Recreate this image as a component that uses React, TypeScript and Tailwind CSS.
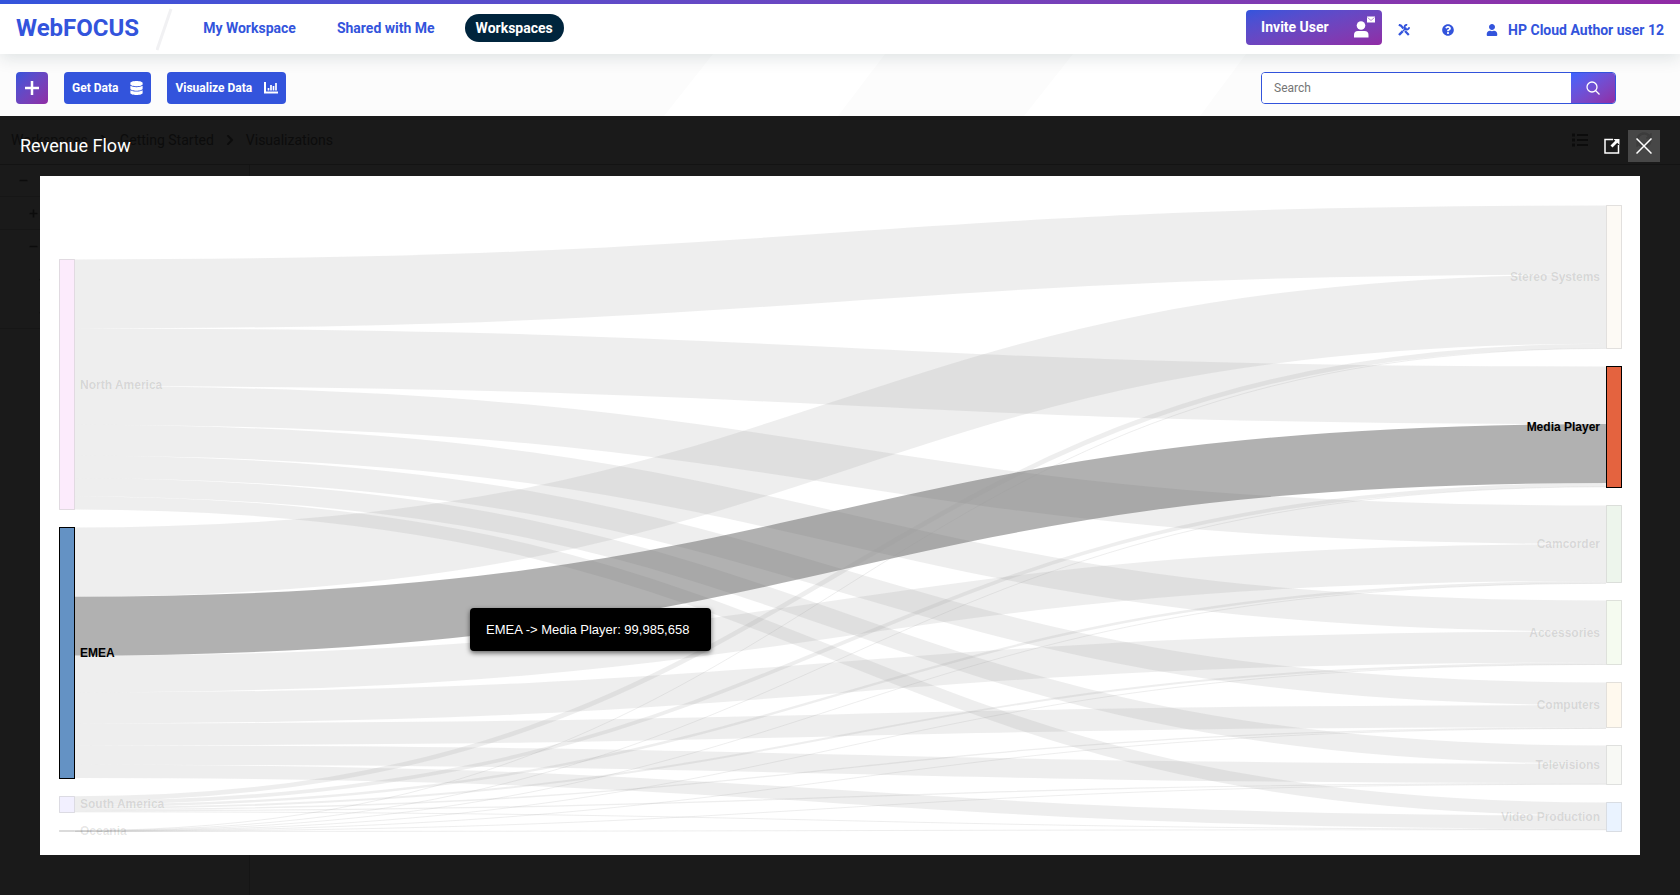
import React from "react";
import { FaDatabase, FaUser, FaQuestionCircle, FaList, FaChevronRight, FaPlus, FaMinus, FaSyncAlt } from "react-icons/fa";

const regions = [
  { name: "North America", y: 259.5, h: 250.4, fill: "#fcebfc", values: [69, 57.6, 38.6, 31, 22.6, 18.2, 13] },
  { name: "EMEA", y: 527.5, h: 250.5, fill: "#6492c4", values: [69.2, 58.9, 36.8, 31, 22, 19.3, 13.3] },
  { name: "South America", y: 796.3, h: 16, fill: "#f2f0ff", values: [4.6, 3.7, 2.4, 1.9, 1.3, 1.2, 0.9] },
  { name: "Oceania", y: 830.5, h: 1, fill: "#eeeeee", values: [0.25, 0.2, 0.15, 0.12, 0.1, 0.1, 0.08] },
];

const products = [
  { name: "Stereo Systems", y: 205.5, h: 143, fill: "#fdfaf5" },
  { name: "Media Player", y: 366.5, h: 121, fill: "#e4633f" },
  { name: "Camcorder", y: 505.5, h: 77, fill: "#edf5ec" },
  { name: "Accessories", y: 600.5, h: 64, fill: "#f5fbf0" },
  { name: "Computers", y: 682.5, h: 45, fill: "#fff9ee" },
  { name: "Televisions", y: 745.5, h: 39, fill: "#f8f9f5" },
  { name: "Video Production", y: 802.5, h: 29, fill: "#eaf3ff" },
];

const LEFT = 75;
const RIGHT = 1606;
const MID = (LEFT + RIGHT) / 2;

function buildLinks() {
  const filled = products.map(() => 0);
  return regions.flatMap((r, i) => {
    let used = 0;
    return r.values.map((v, j) => {
      const y0 = r.y + used + v / 2;
      const y1 = products[j].y + filled[j] + v / 2;
      used += v;
      filled[j] += v;
      return {
        key: `${i}-${j}`,
        d: `M${LEFT},${y0}C${MID},${y0} ${MID},${y1} ${RIGHT},${y1}`,
        width: Math.max(1, v),
        active: i === 1 && j === 1,
      };
    });
  });
}

function Sankey() {
  return (
    <svg viewBox="40 176 1600 679" className="block w-full" role="img" aria-label="Revenue Flow">
      {buildLinks().map((l) => (
        <path
          key={l.key}
          d={l.d}
          fill="none"
          stroke={l.active ? "#595959" : "#999999"}
          strokeWidth={l.width}
          strokeOpacity={l.active ? 0.47 : 0.165}
        />
      ))}
      {regions.map((r) => {
        const on = r.name === "EMEA";
        return (
          <g key={r.name}>
            <rect x={59.5} y={Math.floor(r.y) + 0.5} width={15} height={Math.round(r.h)} fill={r.fill} stroke="#000" strokeOpacity={on ? 1 : 0.11} />
            <text x={80} y={r.y + r.h / 2 + 4} className="text-[12px] font-bold" fill="#000" fillOpacity={on ? 1 : 0.11}>{r.name}</text>
          </g>
        );
      })}
      {products.map((p) => {
        const on = p.name === "Media Player";
        return (
          <g key={p.name}>
            <rect x={1606.5} y={p.y} width={15} height={p.h} fill={p.fill} stroke="#000" strokeOpacity={on ? 1 : 0.11} />
            <text x={1600} y={p.y + p.h / 2 + 4} textAnchor="end" className="text-[12px] font-bold" fill="#000" fillOpacity={on ? 1 : 0.11}>{p.name}</text>
          </g>
        );
      })}
    </svg>
  );
}

function ToolsIcon() {
  return (
    <svg viewBox="0 0 12 12" className="size-3" fill="none" stroke="currentColor">
      <path d="M.8.8l2.200.8L5.400 4.600M7 7l3.800 4" strokeWidth="2.200" />
      <path d="M4.800 7.200L1 11" strokeWidth="2.400" />
      <path d="M5 7l3.400-3.400" strokeWidth="1.500" />
      <path d="M9.200.9a2.300 2.300 0 1 0 1.900 2.300" strokeWidth="1.900" />
    </svg>
  );
}

function Header() {
  return (
    <header className="relative z-10 flex h-[54px] shrink-0 items-center bg-white text-[#3354dc] shadow-[0_4px_16px_rgba(0,40,50,0.12)]">
      <div className="absolute inset-x-0 top-0 h-1 bg-linear-to-r from-[#3354dc] to-[#902ba5]" />
      <h1 className="mt-0.5 pl-4 text-2xl font-bold">WebFOCUS</h1>
      <svg viewBox="0 0 17 43" className="ml-[17px] mt-1 h-[43px] w-[17px]"><path d="M1 42L15 1" stroke="#f1f1f3" strokeWidth="3" /></svg>
      <nav className="ml-4 mt-0.5 flex items-center text-sm font-bold">
        <a href="#my" className="px-[14px]">My Workspace</a>
        <a href="#shared" className="ml-[13px] px-[14px]">Shared with Me</a>
        <a href="#workspaces" className="ml-4 flex h-7 items-center rounded-full bg-[#00253d] px-[11px] text-white">Workspaces</a>
      </nav>
      <div className="ml-auto flex items-center pr-4">
        <button className="flex h-[35px] w-[136px] items-center justify-between rounded bg-linear-to-br from-[#3354dc] to-[#902ba5] pl-[15px] pr-[7px] text-sm font-bold text-white">
          Invite User
          <svg viewBox="0 0 21 22" className="h-[22px] w-[21px]" fill="#fff">
            <circle cx="7" cy="9.500" r="4.300" />
            <path d="M0 21.500v-2.500a4 4 0 0 1 4-4h6.500a4 4 0 0 1 4 4v2.500z" />
            <path d="M13 .5h8v6h-8z" />
            <path d="M13.500 1.500l3.500 3 3.500-3" fill="none" stroke="#9a5fc0" strokeWidth=".7" />
          </svg>
        </button>
        <button aria-label="Tools" className="ml-4 mt-[6px]"><ToolsIcon /></button>
        <button aria-label="Help" className="ml-8 mt-[6px]"><FaQuestionCircle className="size-3" /></button>
        <button className="ml-8 mt-[6px] flex items-center gap-[10px] text-sm font-bold">
          <FaUser className="size-3" />
          HP Cloud Author user 12
        </button>
      </div>
    </header>
  );
}

function Toolbar() {
  return (
    <div className="relative flex h-[62px] shrink-0 items-center overflow-hidden bg-[#fcfcfc] pl-4 pr-16 text-xs font-bold text-white">
      <svg viewBox="0 0 1680 62" preserveAspectRatio="none" className="absolute inset-0 size-full" fill="#fff">
        <path d="M713 0H885L838 62H664zM1073 0H1246L1200 62H1024z" />
      </svg>
      <div className="relative flex w-full items-center pt-[6px]">
        <button aria-label="Add" className="flex size-8 items-center justify-center rounded bg-linear-to-br from-[#3354dc] to-[#902ba5]">
          <svg viewBox="0 0 14 14" className="size-[14px]" stroke="#fff" strokeWidth="2.500"><path d="M7 0v14M0 7h14" /></svg>
        </button>
        <button className="ml-4 flex h-8 items-center gap-3 rounded bg-[#3354dc] px-2">Get Data <FaDatabase className="h-[14px] w-[13px]" /></button>
        <button className="ml-4 flex h-8 items-center gap-3 rounded bg-[#3354dc] px-2">
          Visualize Data
          <svg viewBox="0 0 14 12" className="h-3 w-[14px]" fill="none" stroke="#fff"><path d="M1 0v10.500h13" strokeWidth="2" /><path d="M4.500 8.500V6M7 8.500V3M9.500 8.500V4M12 8.500V1" strokeWidth="1.700" /></svg>
        </button>
        <form className="ml-auto flex h-8 w-[355px] overflow-hidden rounded border border-[#3354dc]">
          <input aria-label="Search" placeholder="Search" className="min-w-0 flex-1 bg-white px-3 text-xs font-normal text-black outline-none placeholder:text-[#757575]" />
          <button type="button" aria-label="Run search" className="flex w-11 items-center justify-center bg-linear-to-br from-[#3b64ff] to-[#902ba5]">
            <svg viewBox="0 0 14 14" className="size-[14px]" fill="none" stroke="#fff" strokeWidth="1.300"><circle cx="6" cy="6" r="5" /><path d="M9.500 9.500l4 4" /></svg>
          </button>
        </form>
      </div>
    </div>
  );
}

function Backdrop() {
  return (
    <div aria-hidden="true" className="absolute inset-0 flex flex-col overflow-hidden text-sm text-[#0c0c0c]">
      <div className="flex h-[49px] shrink-0 items-center border-b border-[#131313] pl-[11px] pr-7">
        <span>Workspaces</span>
        <FaChevronRight className="mx-3 h-3 w-2" />
        <span>Getting Started</span>
        <FaChevronRight className="mx-3 h-3 w-2" />
        <span>Visualizations</span>
        <FaList className="ml-auto mr-12 size-4" />
        <FaSyncAlt className="size-4" />
      </div>
      <div className="flex flex-1">
        <div className="w-[250px] border-r border-[#151515]">
          <div className="flex h-8 items-center border-b border-[#161616] pl-[19px]"><FaMinus className="size-[9px]" /></div>
          <div className="flex h-[33px] items-center border-b border-[#161616] pl-[29px]"><FaPlus className="size-[9px]" /></div>
          <div className="flex h-[33px] items-center pl-[29px]"><FaMinus className="size-[9px]" /></div>
          <div className="flex h-[33px] items-center pl-[39px]"><FaPlus className="size-[9px]" /></div>
          <div className="flex h-[33px] items-center border-b border-[#161616] pl-[39px]"><FaPlus className="size-[9px]" /></div>
        </div>
      </div>
    </div>
  );
}

export default function App() {
  return (
    <div className="flex min-h-screen flex-col bg-[#1a1a1a] font-[Roboto,sans-serif]">
      <Header />
      <Toolbar />
      <main className="relative flex-1 px-10 pb-10">
        <Backdrop />
        <div className="relative -mx-5 flex h-[60px] items-center">
          <h2 className="text-lg text-white">Revenue Flow</h2>
          <button aria-label="Open in new window" className="ml-auto mr-2">
            <svg viewBox="0 0 16 16" className="size-4" fill="none" stroke="#fff"><path d="M9 1.500H1v13.500h13.500V7" strokeWidth="1.500" /><path d="M7.500 8.500l5-5" strokeWidth="2.800" /><path d="M9.500 1h6v6z" fill="#fff" stroke="none" /></svg>
          </button>
          <button aria-label="Close" className="flex size-8 items-center justify-center bg-white/20">
            <svg viewBox="0 0 16 16" className="size-4" stroke="#fff" strokeWidth="1.500"><path d="M.5.5l15 15M15.500.5l-15 15" /></svg>
          </button>
        </div>
        <section className="relative bg-white font-['Liberation_Sans',Arial,sans-serif]">
          <Sankey />
          <div role="tooltip" className="absolute left-[430px] top-[432px] w-[241px] rounded bg-black px-4 py-3 text-[13px] leading-[19px] whitespace-nowrap text-white shadow-[0_2px_5px_rgba(0,0,0,0.6)]">
            EMEA -&gt; Media Player: 99,985,658
          </div>
        </section>
      </main>
    </div>
  );
}
